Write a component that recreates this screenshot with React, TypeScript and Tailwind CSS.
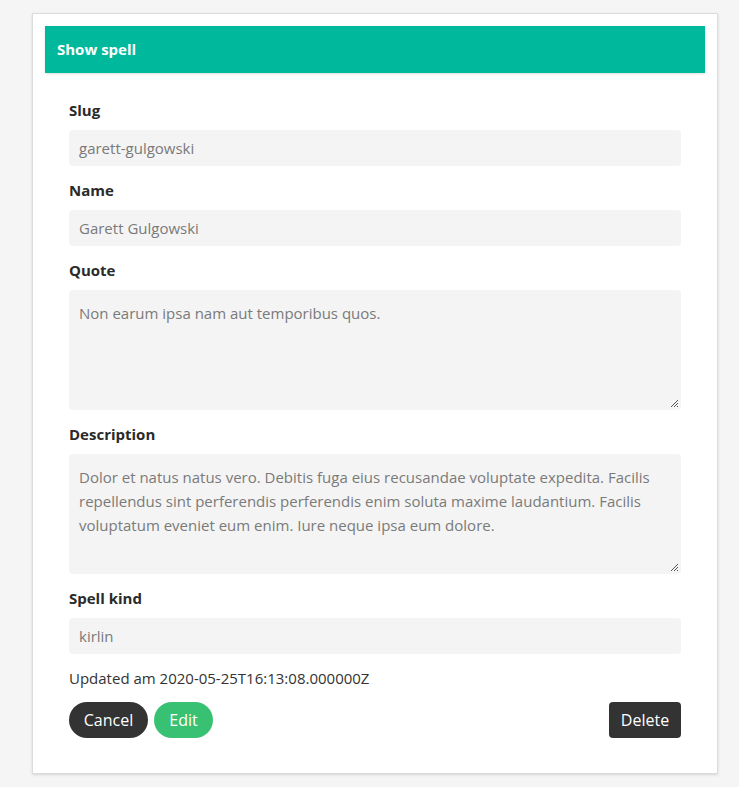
import React from "react";

const font = { fontFamily: '"Open Sans", "Noto Sans", sans-serif' };

function Field({ label, children }: { label: string; children: React.ReactNode }) {
  return (
    <div className="mb-3">
      <div className="h-6 leading-6 text-[15px] font-bold text-[#2a2a2a] mb-2">{label}</div>
      {children}
    </div>
  );
}

function Input({ value }: { value: string }) {
  return (
    <div className="h-9 rounded bg-[#f4f4f4] px-[10px] flex items-center text-[15px] text-[#7a7a7a]">{value}</div>
  );
}

function Area({ value }: { value: string }) {
  return (
    <div className="relative h-[120px] rounded bg-[#f4f4f4] px-[10px] py-[11px] text-[15px] leading-6 text-[#7a7a7a]">
      {value}
      <svg className="absolute right-[2px] bottom-[2px]" width="9" height="9" viewBox="0 0 9 9">
        <path d="M8 1 L1 8 M8 4 L4 8 M8 7 L7 8" stroke="#555" strokeWidth="1" />
      </svg>
    </div>
  );
}

export default function App() {
  return (
    <div className="min-h-[787px] bg-[#f5f5f5] pt-[13px] pl-[32px]" style={font}>
      <div className="w-[686px] bg-white border border-[#dcdcdc] shadow-sm p-3">
        <div className="h-[47px] bg-[#00b89c] flex items-center px-3 text-white font-bold text-[15px] shadow-sm">Show spell</div>
        <div className="px-6 pt-[25px] pb-[23px]">
          <Field label="Slug"><Input value="garett-gulgowski" /></Field>
          <Field label="Name"><Input value="Garett Gulgowski" /></Field>
          <Field label="Quote"><Area value="Non earum ipsa nam aut temporibus quos." /></Field>
          <Field label="Description">
            <Area value="Dolor et natus natus vero. Debitis fuga eius recusandae voluptate expedita. Facilis repellendus sint perferendis perferendis enim soluta maxime laudantium. Facilis voluptatum eveniet eum enim. Iure neque ipsa eum dolore." />
          </Field>
          <Field label="Spell kind"><Input value="kirlin" /></Field>
          <div className="h-6 leading-6 text-[15px] text-[#333] mt-[1px]">Updated am 2020-05-25T16:13:08.000000Z</div>
          <div className="flex items-center mt-3">
            <button className="w-[79px] h-9 rounded-full bg-[#333] text-white text-[16px]">Cancel</button>
            <button className="w-[59px] ml-[6px] h-9 rounded-full bg-[#38c172] text-white text-[16px]">Edit</button>
            <button className="w-[72px] ml-auto h-9 rounded bg-[#333] text-white text-[16px]">Delete</button>
          </div>
        </div>
      </div>
    </div>
  );
}
